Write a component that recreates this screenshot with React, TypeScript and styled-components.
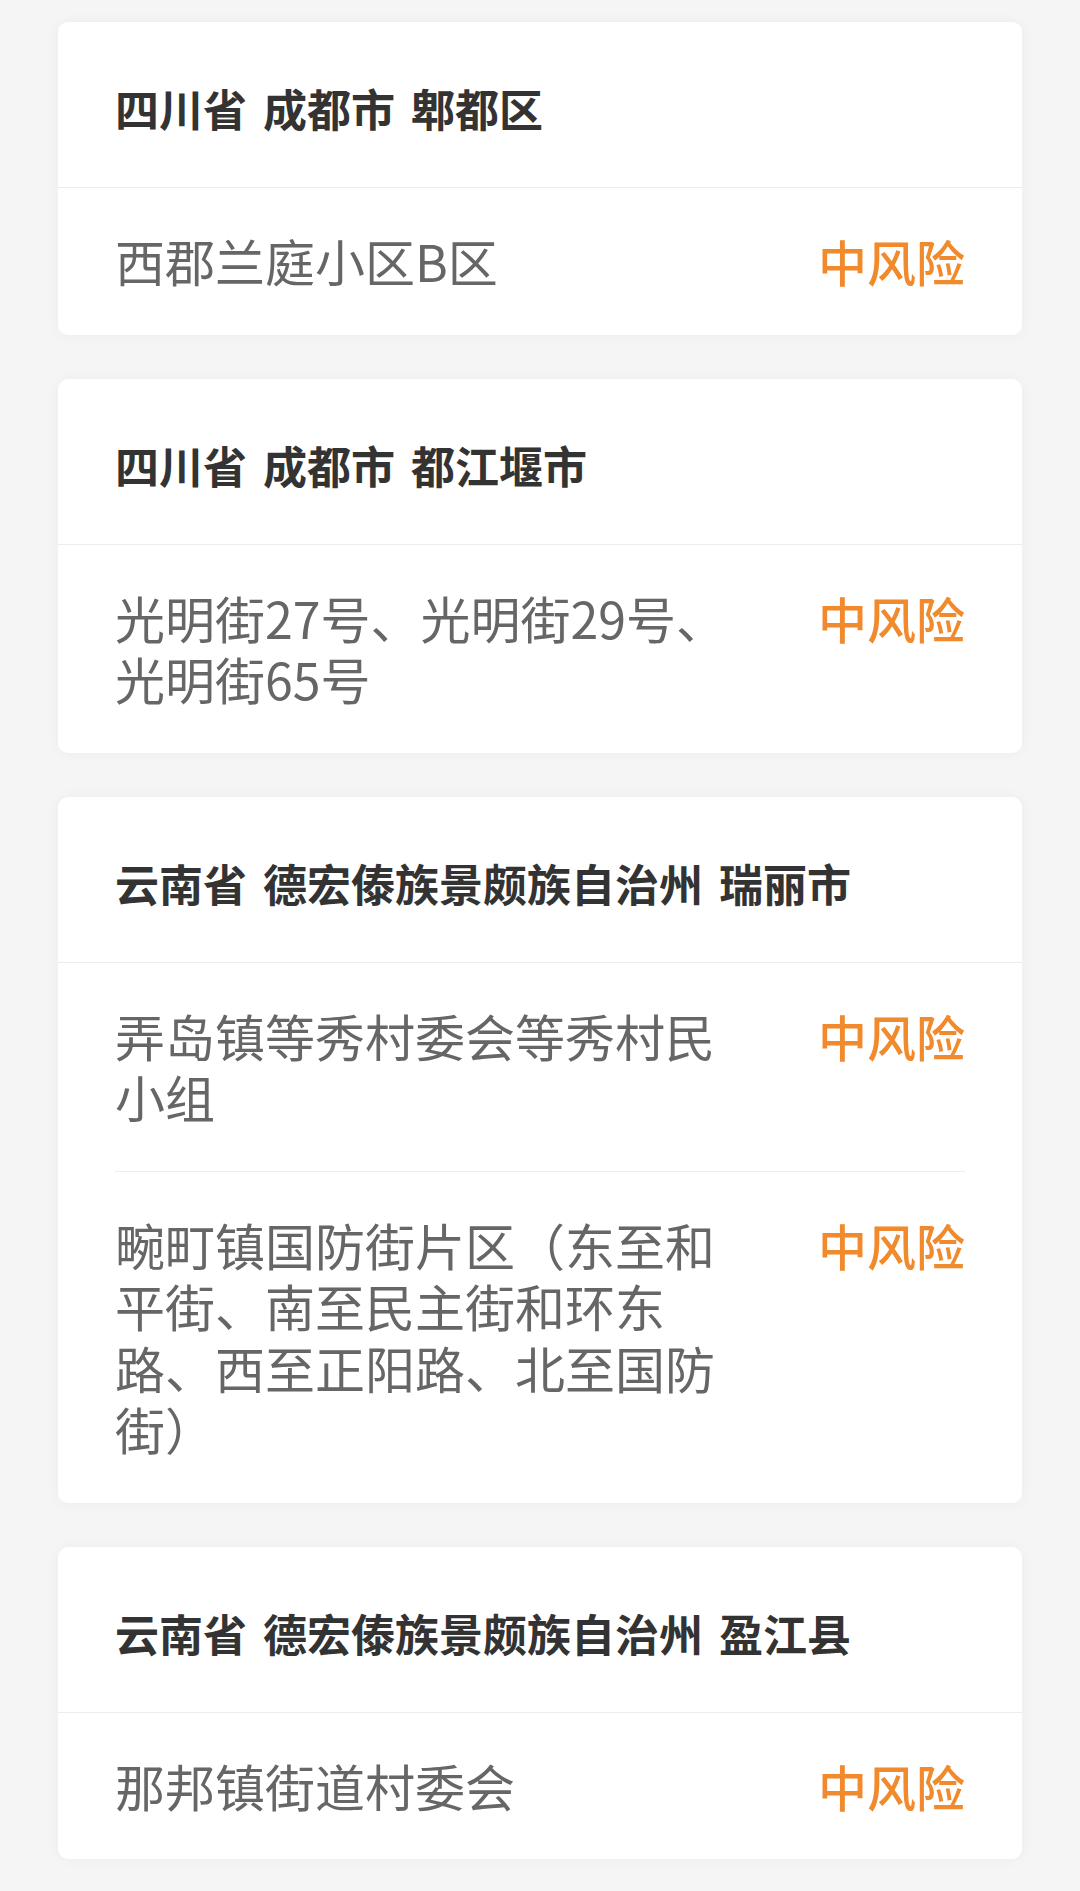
import styled, { createGlobalStyle } from "styled-components";

const GlobalStyle = createGlobalStyle`
  html, body {
    margin: 0;
    padding: 0;
    background: #f5f5f5;
  }
  body {
    font-family: "Noto Sans CJK SC", "Noto Sans", sans-serif;
  }
`;

type Area = {
  region: string;
  items: string[];
};

const areas: Area[] = [
  { region: "四川省 成都市 郫都区", items: ["西郡兰庭小区B区"] },
  {
    region: "四川省 成都市 都江堰市",
    items: ["光明街27号、光明街29号、光明街65号"],
  },
  {
    region: "云南省 德宏傣族景颇族自治州 瑞丽市",
    items: [
      "弄岛镇等秀村委会等秀村民小组",
      "畹町镇国防街片区（东至和平街、南至民主街和环东路、西至正阳路、北至国防街）",
    ],
  },
  { region: "云南省 德宏傣族景颇族自治州 盈江县", items: ["那邦镇街道村委会"] },
];

const Page = styled.div`
  width: 1080px;
  min-height: 1891px;
  box-sizing: border-box;
  padding: 22px 58px;
  display: flex;
  flex-direction: column;
  gap: 44px;
  background: #f5f5f5;
`;

const Card = styled.section`
  background: #fff;
  border-radius: 10px;
  box-shadow: 0 0 14px rgba(0, 0, 0, 0.045);
  overflow: hidden;
`;

const Header = styled.div`
  padding: 55px 57px 48px;
  border-bottom: 1px solid #ececec;
  font-size: 44px;
  line-height: 62px;
  font-weight: 700;
  color: #333;
  word-spacing: 6px;
`;

const List = styled.div`
  padding: 0 57px;
`;

const Row = styled.div`
  display: flex;
  align-items: flex-start;
  padding: 42px 0 43px;
  & + & {
    border-top: 1px solid #ececec;
  }
`;

const Place = styled.div`
  flex: 1;
  min-width: 0;
  font-size: 50px;
  line-height: 61.5px;
  color: #666;
`;

const Level = styled.div`
  flex-shrink: 0;
  margin-left: 64px;
  font-size: 49px;
  line-height: 61.5px;
  font-weight: 500;
  color: #f08a2c;
`;

const App = () => {
  return (
    <>
      <GlobalStyle />
      <Page>
        {areas.map((area) => (
          <Card key={area.region}>
            <Header>{area.region}</Header>
            <List>
              {area.items.map((item) => (
                <Row key={item}>
                  <Place>{item}</Place>
                  <Level>中风险</Level>
                </Row>
              ))}
            </List>
          </Card>
        ))}
      </Page>
    </>
  );
};

export default App;
